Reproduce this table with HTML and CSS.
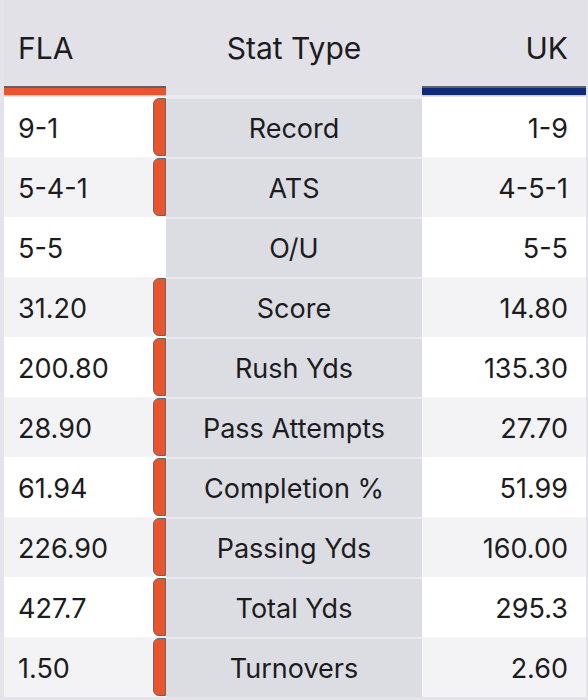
FILE: index.html
```html
<!DOCTYPE html>
<html>
<head>
<meta charset="utf-8">
<link rel="stylesheet" href="styles.css">
</head>
<body>
<div class="table">
  <div class="head">
    <div class="hcell left">FLA</div>
    <div class="hcell mid">Stat Type</div>
    <div class="hcell right">UK</div>
  </div>
  <div class="bars">
    <div class="bar fla"></div>
    <div class="bar none"></div>
    <div class="bar uk"></div>
  </div>
  <div class="row odd"><div class="cell left"><span class="val">9-1</span><span class="mark"></span></div><div class="cell mid">Record</div><div class="cell right">1-9</div></div>
  <div class="row even"><div class="cell left"><span class="val">5-4-1</span><span class="mark"></span></div><div class="cell mid">ATS</div><div class="cell right">4-5-1</div></div>
  <div class="row odd"><div class="cell left"><span class="val">5-5</span></div><div class="cell mid">O/U</div><div class="cell right">5-5</div></div>
  <div class="row even"><div class="cell left"><span class="val">31.20</span><span class="mark"></span></div><div class="cell mid">Score</div><div class="cell right">14.80</div></div>
  <div class="row odd"><div class="cell left"><span class="val">200.80</span><span class="mark"></span></div><div class="cell mid">Rush Yds</div><div class="cell right">135.30</div></div>
  <div class="row even"><div class="cell left"><span class="val">28.90</span><span class="mark"></span></div><div class="cell mid">Pass Attempts</div><div class="cell right">27.70</div></div>
  <div class="row odd"><div class="cell left"><span class="val">61.94</span><span class="mark"></span></div><div class="cell mid">Completion %</div><div class="cell right">51.99</div></div>
  <div class="row even"><div class="cell left"><span class="val">226.90</span><span class="mark"></span></div><div class="cell mid">Passing Yds</div><div class="cell right">160.00</div></div>
  <div class="row odd"><div class="cell left"><span class="val">427.7</span><span class="mark"></span></div><div class="cell mid">Total Yds</div><div class="cell right">295.3</div></div>
  <div class="row even"><div class="cell left"><span class="val">1.50</span><span class="mark"></span></div><div class="cell mid">Turnovers</div><div class="cell right">2.60</div></div>
</div>
</body>
</html>
```
FILE: styles.css
```css
html, body {
  margin: 0;
  padding: 0;
  background: #e4e4ea;
}
body {
  font-family: Inter, "Open Sans", sans-serif;
  color: #1c1c1e;
  height: 700px;
  overflow: hidden;
}
.table {
  margin-left: 4px;
  width: 582px;
  display: flex;
  flex-direction: column;
}
.head, .bars, .row {
  display: grid;
  grid-template-columns: 162px 256px 164px;
}
.head {
  height: 86px;
  background: #e1e1e7;
}
.hcell {
  display: flex;
  align-items: center;
  font-size: 30px;
  padding-top: 10px;
}
.hcell.left { padding-left: 14px; }
.hcell.mid { justify-content: center; }
.hcell.right { justify-content: flex-end; padding-right: 18px; }
.bars {
  height: 11px;
  background: #e1e1e7;
}
.bar {
  border-top: 2px solid #5f6166;
  border-bottom: 1px solid #c9c9cf;
  height: 7px;
}
.bar.fla { background: #e8552d; }
.bar.uk { background: #0f2a7a; }
.bar.none { border: none; border-bottom: 2px solid #ececf0; height: 9px; background: #e1e1e7; }
.row {
  height: 60px;
  font-size: 27px;
}
.cell {
  display: flex;
  align-items: center;
}
.cell.left {
  padding-left: 14px;
  align-items: stretch;
}
.cell.left .val {
  flex: 1;
  display: flex;
  align-items: center;
  padding-top: 2px;
}
.mark {
  width: 11px;
  background: #e8552d;
  border: 1.5px solid #66666a;
  border-radius: 6px 0 0 6px;
  margin: 1px 0;
}
.cell.mid {
  justify-content: center;
  background: #dcdce3;
  border-top: 2px solid #eaeaef;
}
.cell.right {
  justify-content: flex-end;
  padding-right: 18px;
  padding-top: 2px;
}
.row.odd .cell.left, .row.odd .cell.right { background: #ffffff; }
.row.even .cell.left, .row.even .cell.right { background: #f3f3f6; }
```
